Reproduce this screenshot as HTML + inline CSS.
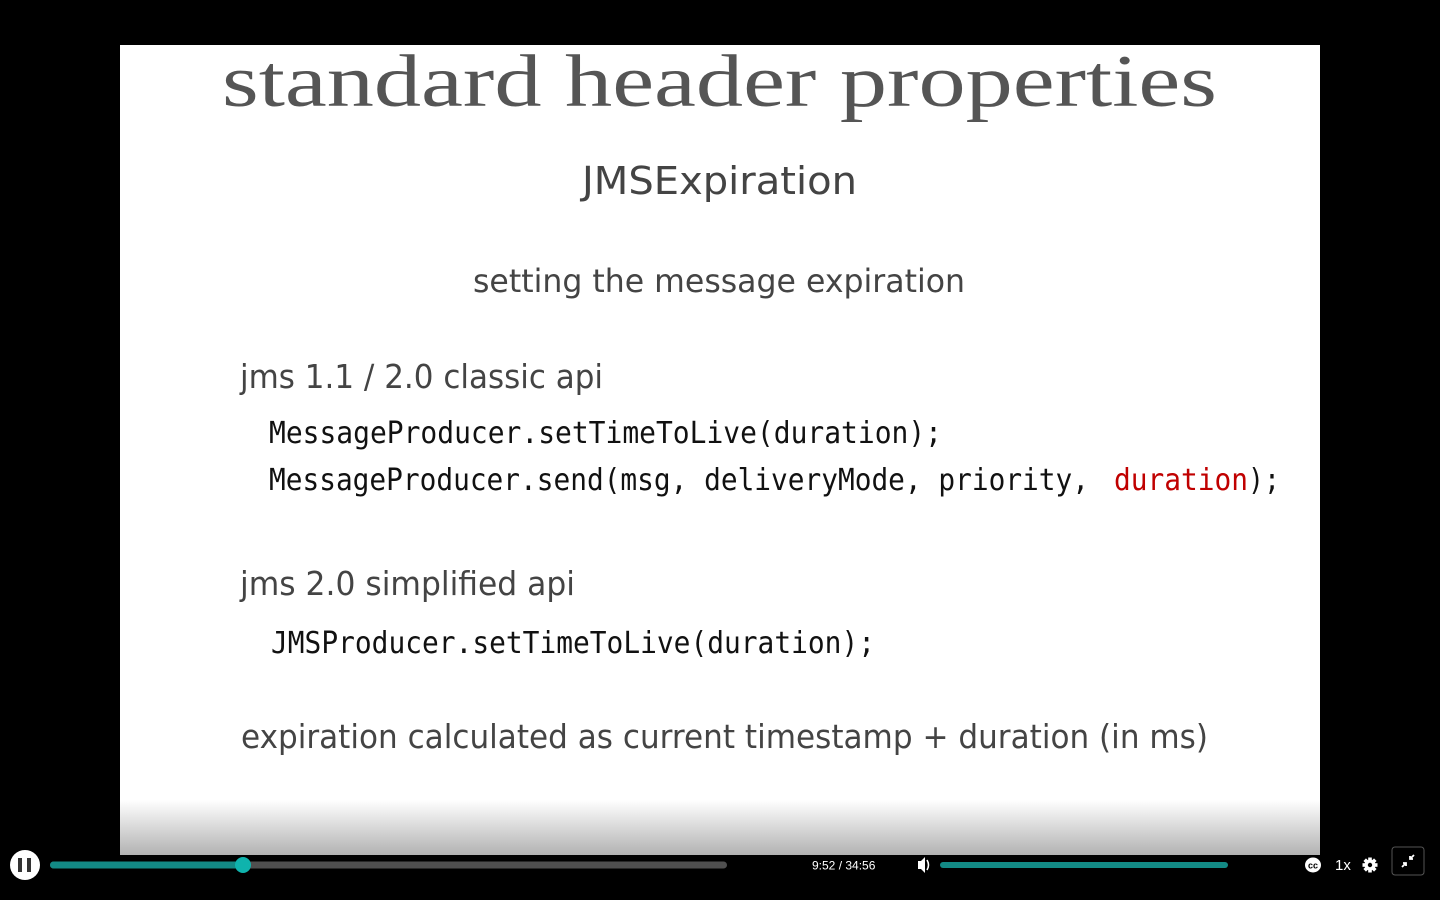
<!DOCTYPE html>
<html><head><meta charset="utf-8"><style>
html,body{margin:0;padding:0;background:#000;width:1440px;height:900px;overflow:hidden}
svg{display:block}
</style></head><body>
<svg width="1440" height="900" viewBox="0 0 1440 900" xmlns="http://www.w3.org/2000/svg">
<defs>
<linearGradient id="g" x1="0" y1="0" x2="0" y2="1">
<stop offset="0" stop-color="#ffffff"/><stop offset="1" stop-color="#b2b2b2"/>
</linearGradient>
</defs>
<rect x="0" y="0" width="1440" height="900" fill="#000"/>
<rect x="120" y="45" width="1200" height="810" fill="#fff"/>
<rect x="120" y="800" width="1200" height="55" fill="url(#g)"/>
<g font-family="Liberation Serif, serif" fill="#555">
<text x="222" y="106" font-size="74" textLength="995" lengthAdjust="spacingAndGlyphs">standard header properties</text>
</g>
<g font-family="DejaVu Sans, Liberation Sans, sans-serif" fill="#444">
<text x="582" y="194" font-size="38" textLength="275" lengthAdjust="spacingAndGlyphs">JMSExpiration</text>
<text x="473" y="292" font-size="32" textLength="492" lengthAdjust="spacingAndGlyphs">setting the message expiration</text>
<text x="240" y="388" font-size="33" textLength="363" lengthAdjust="spacingAndGlyphs">jms 1.1 / 2.0 classic api</text>
<text x="240" y="595" font-size="33" textLength="335" lengthAdjust="spacingAndGlyphs">jms 2.0 simplified api</text>
<text x="241" y="748" font-size="33" textLength="967" lengthAdjust="spacingAndGlyphs">expiration calculated as current timestamp + duration (in ms)</text>
</g>
<g font-family="DejaVu Sans Mono, Liberation Mono, monospace" fill="#111" font-size="30">
<text x="269" y="443" textLength="673" lengthAdjust="spacingAndGlyphs">MessageProducer.setTimeToLive(duration);</text>
<text x="269" y="490" textLength="820" lengthAdjust="spacingAndGlyphs">MessageProducer.send(msg, deliveryMode, priority,</text>
<text x="1114" y="490" fill="#c00000" textLength="134" lengthAdjust="spacingAndGlyphs">duration</text>
<text x="1248" y="490" textLength="32" lengthAdjust="spacingAndGlyphs">);</text>
<text x="271" y="653" textLength="604" lengthAdjust="spacingAndGlyphs">JMSProducer.setTimeToLive(duration);</text>
</g>
<!-- controls -->
<circle cx="25" cy="865" r="15" fill="#fff"/>
<rect x="18" y="858" width="4" height="14" fill="#333"/>
<rect x="27" y="858" width="4" height="14" fill="#333"/>
<rect x="50" y="861.5" width="677" height="7" rx="3.5" fill="#4f4f4f"/>
<rect x="50" y="861.5" width="195" height="7" rx="3.5" fill="#138a85"/>
<ellipse cx="243" cy="865" rx="8" ry="8" fill="#0fb3ad"/>
<text x="812" y="869.5" font-family="Liberation Sans, sans-serif" font-size="12" fill="#fff">9:52 / 34:56</text>
<path d="M918 861h3l4-4v16l-4-4h-3z" fill="#fff"/>
<path d="M927 860q3 5 0 10" stroke="#fff" stroke-width="1.6" fill="none"/>
<rect x="940" y="862" width="288" height="6" rx="3" fill="#138a85"/>
<ellipse cx="1313" cy="865" rx="8" ry="7.5" fill="#fff"/>
<text x="1313" y="868.5" font-family="Liberation Sans, sans-serif" font-size="9" font-weight="bold" fill="#000" text-anchor="middle">cc</text>
<text x="1335" y="870" font-family="Liberation Sans, sans-serif" font-size="15" fill="#fff">1x</text>
<g transform="translate(1370 865)" fill="#fff">
<circle r="5.5"/>
<g><rect x="-1.8" y="-7.5" width="3.6" height="15"/><rect x="-7.5" y="-1.8" width="15" height="3.6"/>
<rect x="-1.8" y="-7.5" width="3.6" height="15" transform="rotate(45)"/><rect x="-1.8" y="-7.5" width="3.6" height="15" transform="rotate(-45)"/></g>
<circle r="2.2" fill="#000"/>
</g>
<rect x="1392" y="847" width="32" height="28" rx="3" fill="#000" stroke="#555" stroke-width="1"/>
<path d="M1414 855l-4 4M1410 856v3h3M1402 867l4-4M1406 866v-3h-3" stroke="#fff" stroke-width="1.8" fill="none"/>
</svg>
</body></html>
